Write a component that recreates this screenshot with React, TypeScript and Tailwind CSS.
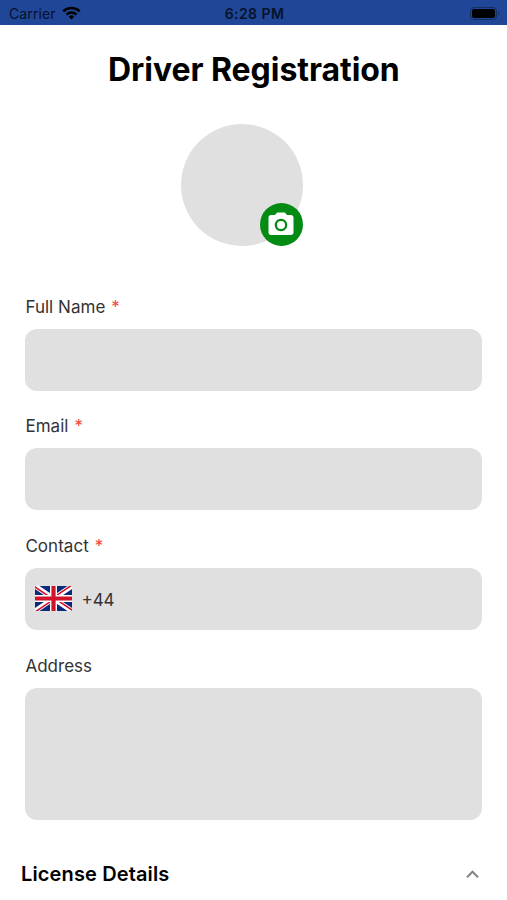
import { MdExpandLess, MdPhotoCamera } from "react-icons/md";

const fields = [
    { label: "Full Name", required: true },
    { label: "Email", required: true },
    { label: "Contact", required: true, dialCode: "+44" },
    { label: "Address", required: false, multiline: true }
];

function StatusBar() {
    return (
        <header className="grid grid-cols-3 items-center h-[25px] pl-[9px] pr-[7px] pt-[2px] bg-[#1f4697] text-[#07122b]">
            <div className="flex items-center gap-[6px] text-[14px] leading-5 tracking-[0.1px]">
                Carrier
                <svg className="-mt-px" width="19" height="14" viewBox="0 0 19 14" fill="none" stroke="#000000" strokeWidth="2.5">
                    <path d="M1.3 5.4a11.6 11.6 0 0 1 16.4 0" />
                    <path d="M4.5 8.6a7.1 7.1 0 0 1 10 0" />
                    <path d="M9.5 13.4 6.8 10.7a3.8 3.8 0 0 1 5.4 0Z" fill="#000000" stroke="none" />
                </svg>
            </div>
            <span className="text-center text-[14px] leading-5 font-semibold tracking-[0.45px]">6:28 PM</span>
            <svg className="justify-self-end" width="30" height="13" viewBox="0 0 30 13">
                <rect x="0.5" y="0.5" width="26" height="12" rx="3.5" fill="none" stroke="#132e66" />
                <rect x="2" y="2" width="23" height="9" rx="2" fill="#000000" />
                <path d="M28 4.5c1.5.6 1.5 3.4 0 4Z" fill="#132e66" />
            </svg>
        </header>
    );
}

function UkFlag() {
    return (
        <svg className="shrink-0" width="37" height="25" viewBox="0 0 37 25">
            <rect width="37" height="25" fill="#0a2a7c" />
            <path d="M0 0 37 25M37 0 0 25" stroke="#ffffff" strokeWidth="5" />
            <path d="M-.5.7 18 13.2M37.5 24.3 19 11.8M36.5-.7 18 11.8M.5 25.7 19 13.2" stroke="#d0142c" strokeWidth="1.6" />
            <path d="M18.5 0V25M0 12.5H37" stroke="#ffffff" strokeWidth="7" />
            <path d="M18.5 0V25M0 12.5H37" stroke="#d0142c" strokeWidth="4.2" />
        </svg>
    );
}

export default function App() {
    return (
        <div className="h-[900px] overflow-hidden bg-white font-['Inter',sans-serif]">
            <StatusBar />

            <main className="pl-[25.4px] pr-[24.6px]">
                <h1 className="pt-[25px] text-center text-[32px] leading-10 font-bold tracking-[-0.05px] text-black">
                    Driver Registration
                </h1>

                <div className="relative ml-[155.3px] mt-[34.3px] size-[122px] rounded-full bg-[#e0e0e0]">
                    <button className="absolute right-0 bottom-0 flex size-[43px] items-center justify-center rounded-full bg-[#048b14] text-white">
                        <MdPhotoCamera size={30} />
                    </button>
                </div>

                <form className="mt-[48.3px] flex flex-col gap-[23.7px]">
                    {fields.map((field) => (
                        <div key={field.label}>
                            <label className="block mb-[10px] text-[17px] leading-6 tracking-[0.03px] text-[#333333]">
                                {field.label}
                                {field.required && <span className="ml-[6px] text-[#f44336]">*</span>}
                            </label>
                            <div className={`flex items-center rounded-[12px] bg-[#e0e0e0] pl-[9.5px] text-[17px] text-[#333333] ${field.multiline ? "h-[132px]" : "h-[62px]"}`}>
                                {field.dialCode && (
                                    <>
                                        <UkFlag />
                                        <span className="ml-[9.5px] pt-[3px]">{field.dialCode}</span>
                                    </>
                                )}
                            </div>
                        </div>
                    ))}
                </form>
            </main>

            <section className="mt-[40.8px] flex items-center justify-between pl-[21px] pr-[22px]">
                <h2 className="text-[20px] leading-7 font-semibold tracking-[0.13px] text-black">License Details</h2>
                <MdExpandLess size={25} className="text-[#858585]" />
            </section>
        </div>
    );
}
